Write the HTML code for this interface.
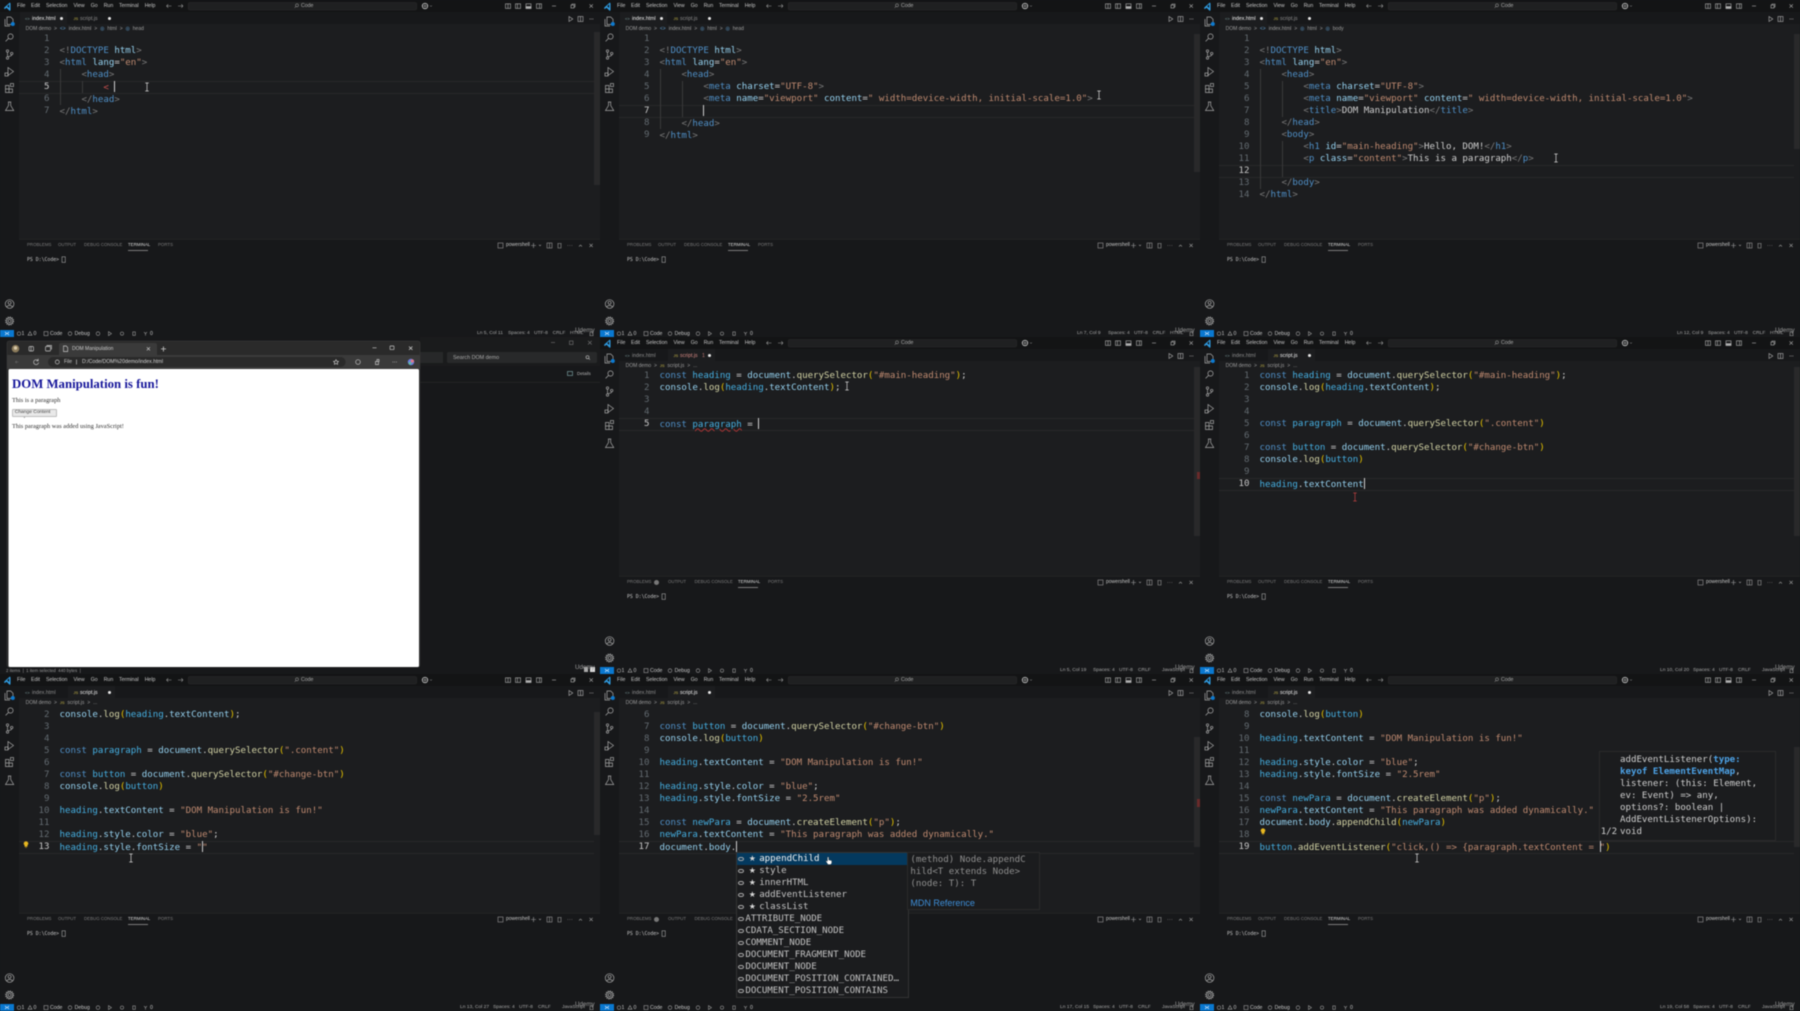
<!DOCTYPE html>
<html lang="en"><head><meta charset="utf-8"><title>VS Code DOM lesson</title>
<style>
html,body{margin:0;padding:0;background:#17181a;width:1800px;height:1011px;overflow:hidden}
#r{position:absolute;left:0;top:0;width:1800px;height:1011px;overflow:hidden;filter:blur(.4px);font-family:"Liberation Sans",sans-serif}
.p{position:absolute;width:600px;height:337px;overflow:hidden;font-size:5.2px;color:#b8b8b8}
.ch{position:absolute;left:0;top:0;width:600px;height:337px}
.tx span,.pt span,.sr span,.tb span,.tb i{position:absolute;line-height:6px;white-space:pre}
.tx span{top:3.300px;color:#c4c4c4}
.tx span:nth-child(1){left:17px}.tx span:nth-child(2){left:31px}.tx span:nth-child(3){left:46px}.tx span:nth-child(4){left:73.5px}.tx span:nth-child(5){left:90.7px}.tx span:nth-child(6){left:103.7px}.tx span:nth-child(7){left:119px}.tx span:nth-child(8){left:144.7px}.tx span:nth-child(9){left:301px;color:#aaa}
.tx span:nth-child(10){left:506px;top:242px;font-size:5px}
.tx span:nth-child(11){left:27px;top:256.500px;font:4.85px/6px "DejaVu Sans Mono",monospace}
.tx span:nth-child(12){left:21.5px;top:330.700px}.tx span:nth-child(13){left:33.5px;top:330.700px}.tx span:nth-child(14){left:50px;top:330.700px}.tx span:nth-child(15){left:74.6px;top:330.700px}.tx span:nth-child(16){left:150px;top:330.700px}
.tx span:nth-child(17){left:575px;top:327.500px;font-size:6.2px;color:#9a9a9a}
.pt span{top:242px;font-size:4.4px;color:#7c7c7c}
.pt span:nth-child(1){left:27px}.pt span:nth-child(2){left:58px}.pt span:nth-child(3){left:84px}.pt span:nth-child(4){left:128px;color:#dedede}.pt span:nth-child(5){left:158px}
.pt.b span:nth-child(2){left:68px}.pt.b span:nth-child(3){left:94.5px}.pt.b span:nth-child(4){left:138px}.pt.b span:nth-child(5){left:168px}
.sr span{top:330.700px;font-size:4.9px;color:#a8a8a8}
.sr span:nth-child(1){left:477px}.sr span:nth-child(2){left:508px}.sr span:nth-child(3){left:534px}.sr span:nth-child(4){left:552.6px}.sr span:nth-child(5){left:570px}
.sr.j span:nth-child(1){left:460px}.sr.j span:nth-child(2){left:493px}.sr.j span:nth-child(3){left:519px}.sr.j span:nth-child(4){left:538px}.sr.j span:nth-child(5){left:562px}
.tb span{top:16px;color:#8c8c8c}
.tb .on{color:#f0f0f0}
.tb .t1{left:32px}.tb .t2{left:80px}
.tb .h1{left:25px;top:16px;font-size:4px;color:#8aa}.tb .j1{left:73.5px;font-size:4px;color:#c9b84a}
.a1,.a2{position:absolute;top:12px;height:12px;background:#1c1d1f}.tb .a1{left:20px;width:47px}.tb .a2{left:67.5px;width:47.5px}
.tb i.dt{width:3px;height:3px;border-radius:50%;background:#e8e8e8;top:17px}
.bc{position:absolute;left:25.6px;top:26px;line-height:6px;display:flex;gap:2.9px;color:#9c9c9c;white-space:pre;font-size:5px}
.bc b{font-weight:400;color:#5f9ccc}.bc u{text-decoration:none;color:#c9b84a;font-size:4px}
.ed{position:absolute;left:19px;top:34px;width:575px;height:205px;overflow:hidden}
pre{position:absolute;margin:0;font:9.12px/12px "DejaVu Sans Mono",monospace;white-space:pre;color:#cfcfcf}
pre i{font-style:normal}
.c{left:40.5px}
.n{left:1px;width:29.5px;text-align:right;color:#626a70}
.n b{font-weight:400;color:#c6c6c6}
.k{color:#4f8fc6}.v{color:#45aee0}.w{color:#94d0ee}.f{color:#d2d2a4}.s{color:#bf8a70}.g{color:#7a7a7a}.y{color:#e8c400}.e{color:#c8504f}
.hl{position:absolute;left:0;width:575px;height:11px;border-top:.5px solid #282829;border-bottom:.5px solid #282829}
.gd{position:absolute;width:.6px;background:#3a3a3a}
.cu{display:inline-block;width:0;height:11px;border-left:.9px solid #cfcfcf;vertical-align:-2px;margin-right:-.9px}
.sq{text-decoration:underline wavy #a33;text-decoration-thickness:.4px;text-underline-offset:1px}
.ib{position:absolute;width:8px;height:10px;overflow:visible;color:#d8d8d8}
.sb{position:absolute;left:594.3px;width:5.7px;background:#29292a}
.sg{position:absolute;left:136.6px;top:178.7px;width:171px;height:144px;background:#1b1c1e;outline:.6px solid #333;font:9.12px/12px "DejaVu Sans Mono",monospace;color:#c4c4c4}
.sg div{height:12px;position:relative;padding-left:8.8px;white-space:pre}
.sg div.st{padding-left:22.6px}
.sg div.se{background:#04395e;color:#f4f4f4}
.sg div::before{content:"";position:absolute;left:1.9px;top:4.4px;width:3.2px;height:2.4px;border:.6px solid #a9a9a9;border-radius:50%}
.sg div.st em{position:absolute;left:12.2px;top:0;font:normal 8px/12px "DejaVu Sans",sans-serif;color:#d8d8d8}
.dc{position:absolute;left:308.4px;top:178.7px;width:130.4px;height:56.6px;background:#1b1c1e;outline:.5px solid #2a2a2a}
.dc pre{left:2px;top:1.6px;color:#8f8f8f}
.dc span{position:absolute;left:2px;top:44px;font-size:9px;line-height:12px;color:#3d8ed8;white-space:pre}
.pw{position:absolute;left:399.5px;top:78px;width:175.5px;height:88px;background:#1b1c1e;outline:.5px solid #2a2a2a}
.pw pre{left:20.5px;top:2px}
.pw .z{left:1.2px;top:74px}
.pw .bl{color:#4da3e8;font-weight:700}
.br span{position:absolute;white-space:pre}
</style></head><body><div id="r">
<svg width="0" height="0" style="position:absolute"><defs>
<symbol id="ib" viewBox="0 0 8 10"><path d="M2.3 1h3.4M4 1v8M2.3 9h3.4" stroke="currentColor" stroke-width=".7" fill="none"/></symbol>
<symbol id="chrome" viewBox="0 0 600 337">
<rect width="600" height="337" fill="#17181a"/>
<rect width="600" height="12" fill="#131415"/>
<rect x="19" y="24" width="581" height="215" fill="#1c1d1f"/>
<path d="M19 239.300h581" stroke="#272829" stroke-width=".6"/>
<path d="M4.3 7.5l5.6-5 .6 1v6.500l-.6 1-3.400-3.300-1.600 1.300-.8-.5zM9.200 4.300l-2 1.900 2 1.800z" fill="#2f9be0"/>
<path d="M166.500 6h5M166.500 6l1.700-1.700M166.500 6l1.700 1.700M178 6h5M183 6l-1.700-1.700M183 6l-1.700 1.700" stroke="#9a9a9a" stroke-width=".6" fill="none"/>
<rect x="188.200" y="2.500" width="228.500" height="7.500" rx="1.500" fill="#1f2021" stroke="#2c2c2c" stroke-width=".5"/>
<circle cx="297" cy="5.300" r="1.500" fill="none" stroke="#aaa" stroke-width=".5"/><path d="M296 6.400l-1.400 1.400" stroke="#aaa" stroke-width=".5"/>
<circle cx="425" cy="6" r="2.700" fill="none" stroke="#bbb" stroke-width=".9"/><path d="M423 6h4M425 4v4" stroke="#bbb" stroke-width=".5"/><path d="M430 5.500l1 1 1-1" stroke="#999" stroke-width=".5" fill="none"/>
<g fill="none" stroke="#b0b0b0" stroke-width=".6"><rect x="505.500" y="3.800" width="5" height="4.600"/><path d="M508 3.800v4.600"/><rect x="515.500" y="3.800" width="5" height="4.600"/><path d="M517.500 3.800v4.600"/><rect x="526" y="3.800" width="5" height="4.600"/><path d="M526 6.500h5v1.900h-5z" fill="#b0b0b0"/><rect x="536.500" y="3.800" width="5" height="4.600"/><path d="M539.500 3.800v4.600"/>
<path d="M552 6h4"/><rect x="571" y="5" width="3" height="3"/><path d="M572 5v-1h3v3h-1"/><path d="M589.500 4.300l3.400 3.400M592.900 4.300l-3.400 3.400"/>
<path d="M569 16.500l3.800 2.500-3.800 2.500z"/><rect x="578" y="16.500" width="5" height="5"/><path d="M580.500 16.500v5"/></g>
<path d="M589.500 19h.8M591 19h.8M592.500 19h.8" stroke="#aaa" stroke-width=".7"/>
<g fill="none" stroke="#a8a8a8" stroke-width=".7">
<path d="M7 17h3.700l2.300 2.300v5.200h-6zM5 19v7h5"/>
<circle cx="10.500" cy="36.500" r="2.600"/><path d="M8.600 38.400l-3 3"/>
<circle cx="7.500" cy="51" r="1.200"/><circle cx="7.500" cy="58" r="1.200"/><circle cx="11.700" cy="53.500" r="1.200"/><path d="M7.500 52.200v4.600M11.700 54.700c0 2-4.200 1.500-4.200 2.300"/>
<path d="M8 67.500l5.500 4-5.500 4z"/><rect x="5" y="73" width="3" height="3"/>
<path d="M5.500 85.500h3.500v3.500h-3.500zM5.500 89h3.500v3.500h-3.500zM9 89h3.500v3.500h-3.500z"/><rect x="10.500" y="83.500" width="3" height="3"/>
<path d="M8 102h3.200M8.500 102v3.500l-3 5h8.200l-3-5V102"/>
<circle cx="9.600" cy="304" r="4.300"/><circle cx="9.600" cy="302.800" r="1.500"/><path d="M6.600 307.200c1-2.300 5-2.300 6 0"/>
<circle cx="9.600" cy="321" r="1.500"/><circle cx="9.600" cy="321" r="3.100"/><circle cx="9.600" cy="321" r="4" stroke-width="1" stroke-dasharray="1.100 1"/>
</g>
<circle cx="12.800" cy="24" r="2" fill="#0d7ad0"/>
<g fill="none" stroke="#a0a0a0" stroke-width=".55">
<rect x="498" y="243" width="5" height="5"/><path d="M533.500 243v5M531 245.500h5M539 244.800l1 1 1-1" stroke-width=".6"/><rect x="547" y="243" width="5" height="5"/><path d="M549.500 243v5"/><path d="M557.500 243.500h4M558 243.500v4.500h3v-4.500" /><path d="M567.500 245.500h.7M569.500 245.500h.7M571.500 245.500h.7"/><path d="M579 246.500l1.500-1.500 1.500 1.500"/><path d="M589.500 243.800l3.200 3.200M592.700 243.800l-3.200 3.200"/>
</g>
<rect x="62" y="256.800" width="3.300" height="5.600" fill="none" stroke="#bbb" stroke-width=".5"/>
<rect y="330" width="14" height="7" fill="#0a78d0"/><path d="M5 332l1.700 1.500-1.700 1.500M9 332l-1.700 1.500 1.700 1.500" stroke="#e8f2ff" stroke-width=".6" fill="none"/>
<g fill="none" stroke="#a4a4a4" stroke-width=".55" transform="translate(0 .6)"><circle cx="19" cy="333" r="1.700"/><path d="M30 331l2 3.600h-4z"/><rect x="44" y="331" width="4" height="4"/><circle cx="70" cy="333" r="1.800"/><circle cx="98" cy="333" r="1.800"/><path d="M108.500 331l3 2-3 2z"/><circle cx="122" cy="333" r="1.600"/><rect x="132.800" y="331.300" width="2.500" height="3.500"/><path d="M144 331.500l1.500 1.500 1.500-1.500M145.500 333v2"/><path d="M589.500 335h4M590 335v-2.200c0-2.100 3-2.100 3 0v2.200"/></g>
</symbol>
</defs></svg>

<!-- row 1 col 1 -->
<div class="p" style="left:0;top:0"><svg class="ch"><use href="#chrome"/></svg>
<div class="tx"><span>File</span><span>Edit</span><span>Selection</span><span>View</span><span>Go</span><span>Run</span><span>Terminal</span><span>Help</span><span>Code</span><span>powershell</span><span>PS D:\Code&gt;</span><span>1</span><span>0</span><span>Code</span><span>Debug</span><span>0</span><span>Udemy</span></div>
<div class="tb"><i class="a1"></i><span class="h1">&lt;&gt;</span><span class="t1 on">index.html</span><i class="dt" style="left:60px"></i><span class="j1">JS</span><span class="t2">script.js</span><i class="dt" style="left:107.500px"></i></div>
<div class="bc"><span>DOM demo</span><span>&gt;</span><b>&lt;&gt;</b><span>index.html</span><span>&gt;</span><b>◎</b><span>html</span><span>&gt;</span><b>◎</b><span>head</span></div>
<div class="sb" style="top:32px;height:153px"></div>
<div class="ed"><i class="hl" style="top:46.700px"></i><i class="gd" style="left:41px;top:34.700px;height:36px"></i><i class="gd" style="left:62.500px;top:46.700px;height:12px"></i>
<pre class="n" style="top:-1.300px">1
2
3
4
<b>5</b>
6
7</pre><pre class="c" style="top:-1.300px">&#8203;
<i class="g">&lt;!</i><i class="k">DOCTYPE</i> <i class="w">html</i><i class="g">&gt;</i>
<i class="g">&lt;</i><i class="k">html</i> <i class="w">lang</i>=<i class="s">"en"</i><i class="g">&gt;</i>
    <i class="g">&lt;</i><i class="k">head</i><i class="g">&gt;</i>
        <i class="e">&lt;</i> <i class="cu"></i>
    <i class="g">&lt;/</i><i class="k">head</i><i class="g">&gt;</i>
<i class="g">&lt;/</i><i class="k">html</i><i class="g">&gt;</i></pre></div>
<svg class="ib" style="left:143px;top:81.700px"><use href="#ib"/></svg>
<div class="pt"><span>PROBLEMS</span><span>OUTPUT</span><span>DEBUG CONSOLE</span><span>TERMINAL</span><span>PORTS</span></div><i style="position:absolute;left:128px;top:250px;width:20px;height:.6px;background:#7a7a7a"></i>
<div class="sr"><span>Ln 5, Col 11</span><span>Spaces: 4</span><span>UTF-8</span><span>CRLF</span><span>HTML</span></div></div>

<!-- row 1 col 2 -->
<div class="p" style="left:600px;top:0"><svg class="ch"><use href="#chrome"/></svg>
<div class="tx"><span>File</span><span>Edit</span><span>Selection</span><span>View</span><span>Go</span><span>Run</span><span>Terminal</span><span>Help</span><span>Code</span><span>powershell</span><span>PS D:\Code&gt;</span><span>1</span><span>0</span><span>Code</span><span>Debug</span><span>0</span><span>Udemy</span></div>
<div class="tb"><i class="a1"></i><span class="h1">&lt;&gt;</span><span class="t1 on">index.html</span><i class="dt" style="left:60px"></i><span class="j1">JS</span><span class="t2">script.js</span><i class="dt" style="left:107.500px"></i></div>
<div class="bc"><span>DOM demo</span><span>&gt;</span><b>&lt;&gt;</b><span>index.html</span><span>&gt;</span><b>◎</b><span>html</span><span>&gt;</span><b>◎</b><span>head</span></div>
<div class="sb" style="top:34px;height:138px"></div>
<div class="ed"><i class="hl" style="top:70.700px"></i><i class="gd" style="left:41px;top:34.700px;height:60px"></i><i class="gd" style="left:62.500px;top:46.700px;height:36px"></i>
<pre class="n" style="top:-1.300px">1
2
3
4
5
6
<b>7</b>
8
9</pre><pre class="c" style="top:-1.300px">&#8203;
<i class="g">&lt;!</i><i class="k">DOCTYPE</i> <i class="w">html</i><i class="g">&gt;</i>
<i class="g">&lt;</i><i class="k">html</i> <i class="w">lang</i>=<i class="s">"en"</i><i class="g">&gt;</i>
    <i class="g">&lt;</i><i class="k">head</i><i class="g">&gt;</i>
        <i class="g">&lt;</i><i class="k">meta</i> <i class="w">charset</i>=<i class="s">"UTF-8"</i><i class="g">&gt;</i>
        <i class="g">&lt;</i><i class="k">meta</i> <i class="w">name</i>=<i class="s">"viewport"</i> <i class="w">content</i>=<i class="s">" width=device-width, initial-scale=1.0"</i><i class="g">&gt;</i>
        <i class="cu"></i>
    <i class="g">&lt;/</i><i class="k">head</i><i class="g">&gt;</i>
<i class="g">&lt;/</i><i class="k">html</i><i class="g">&gt;</i></pre></div>
<svg class="ib" style="left:495px;top:90px"><use href="#ib"/></svg>
<div class="pt"><span>PROBLEMS</span><span>OUTPUT</span><span>DEBUG CONSOLE</span><span>TERMINAL</span><span>PORTS</span></div><i style="position:absolute;left:128px;top:250px;width:20px;height:.6px;background:#7a7a7a"></i>
<div class="sr"><span>Ln 7, Col 9</span><span>Spaces: 4</span><span>UTF-8</span><span>CRLF</span><span>HTML</span></div></div>

<!-- row 1 col 3 -->
<div class="p" style="left:1200px;top:0"><svg class="ch"><use href="#chrome"/></svg>
<div class="tx"><span>File</span><span>Edit</span><span>Selection</span><span>View</span><span>Go</span><span>Run</span><span>Terminal</span><span>Help</span><span>Code</span><span>powershell</span><span>PS D:\Code&gt;</span><span>1</span><span>0</span><span>Code</span><span>Debug</span><span>0</span><span>Udemy</span></div>
<div class="tb"><i class="a1"></i><span class="h1">&lt;&gt;</span><span class="t1 on">index.html</span><i class="dt" style="left:60px"></i><span class="j1">JS</span><span class="t2">script.js</span><i class="dt" style="left:107.500px"></i></div>
<div class="bc"><span>DOM demo</span><span>&gt;</span><b>&lt;&gt;</b><span>index.html</span><span>&gt;</span><b>◎</b><span>html</span><span>&gt;</span><b>◎</b><span>body</span></div>
<div class="sb" style="top:34px;height:115px"></div>
<div class="ed"><i class="hl" style="top:130.700px"></i><i class="gd" style="left:41px;top:34.700px;height:120px"></i><i class="gd" style="left:62.500px;top:46.700px;height:36px"></i><i class="gd" style="left:62.500px;top:106.700px;height:36px"></i>
<pre class="n" style="top:-1.300px">1
2
3
4
5
6
7
8
9
10
11
<b>12</b>
13
14</pre><pre class="c" style="top:-1.300px">&#8203;
<i class="g">&lt;!</i><i class="k">DOCTYPE</i> <i class="w">html</i><i class="g">&gt;</i>
<i class="g">&lt;</i><i class="k">html</i> <i class="w">lang</i>=<i class="s">"en"</i><i class="g">&gt;</i>
    <i class="g">&lt;</i><i class="k">head</i><i class="g">&gt;</i>
        <i class="g">&lt;</i><i class="k">meta</i> <i class="w">charset</i>=<i class="s">"UTF-8"</i><i class="g">&gt;</i>
        <i class="g">&lt;</i><i class="k">meta</i> <i class="w">name</i>=<i class="s">"viewport"</i> <i class="w">content</i>=<i class="s">" width=device-width, initial-scale=1.0"</i><i class="g">&gt;</i>
        <i class="g">&lt;</i><i class="k">title</i><i class="g">&gt;</i>DOM Manipulation<i class="g">&lt;/</i><i class="k">title</i><i class="g">&gt;</i>
    <i class="g">&lt;/</i><i class="k">head</i><i class="g">&gt;</i>
    <i class="g">&lt;</i><i class="k">body</i><i class="g">&gt;</i>
        <i class="g">&lt;</i><i class="k">h1</i> <i class="w">id</i>=<i class="s">"main-heading"</i><i class="g">&gt;</i>Hello, DOM!<i class="g">&lt;/</i><i class="k">h1</i><i class="g">&gt;</i>
        <i class="g">&lt;</i><i class="k">p</i> <i class="w">class</i>=<i class="s">"content"</i><i class="g">&gt;</i>This is a paragraph<i class="g">&lt;/</i><i class="k">p</i><i class="g">&gt;</i>

    <i class="g">&lt;/</i><i class="k">body</i><i class="g">&gt;</i>
<i class="g">&lt;/</i><i class="k">html</i><i class="g">&gt;</i></pre></div>
<svg class="ib" style="left:352px;top:153px"><use href="#ib"/></svg>
<div class="pt"><span>PROBLEMS</span><span>OUTPUT</span><span>DEBUG CONSOLE</span><span>TERMINAL</span><span>PORTS</span></div><i style="position:absolute;left:128px;top:250px;width:20px;height:.6px;background:#7a7a7a"></i>
<div class="sr"><span>Ln 12, Col 9</span><span>Spaces: 4</span><span>UTF-8</span><span>CRLF</span><span>HTML</span></div></div>

<!-- row 2 col 1: browser over explorer -->
<div class="p br" style="left:0;top:337px;background:#17181a">
<svg width="600" height="337" style="position:absolute;left:0;top:0">
<rect x="420" y="0" width="180" height="13" fill="#1a1b1c"/>
<rect x="420" y="13" width="180" height="16" fill="#1a1b1c"/>
<rect x="420" y="15" width="23" height="11" fill="#272829"/>
<rect x="447" y="15" width="150" height="11" rx="1.500" fill="#28292a"/>
<path d="M420 45.300h180" stroke="#2b2b2b" stroke-width=".7"/>
<g fill="none" stroke="#777" stroke-width=".6"><path d="M551 5.500h4"/><rect x="569.500" y="4" width="3.500" height="3.500"/><path d="M588 3.800l3.700 3.700M591.700 3.800L588 7.500"/></g>
<g fill="none" stroke="#bbb" stroke-width=".6"><circle cx="587.500" cy="20.200" r="1.500"/><path d="M588.600 21.300l1.400 1.400"/></g>
<rect x="567.500" y="34.500" width="5" height="4" fill="none" stroke="#9cc" stroke-width=".5"/>
<rect x="7" y="4" width="413" height="326" rx="2" fill="#2a2a2a" stroke="#3a3a3a" stroke-width=".5"/>
<rect x="7" y="18" width="413" height="14" fill="#3a3a3a"/>
<path d="M59 18v-10q0-2 2-2h94q2 0 2 2v10z" fill="#3a3a3a"/>
<rect x="48" y="20" width="297.600" height="10" rx="5" fill="#2a2a2a"/>
<rect x="8.500" y="32" width="410.500" height="298" rx="1.500" fill="#fff"/>
<circle cx="15.500" cy="11.700" r="3.800" fill="#8a7a5a"/><circle cx="15.500" cy="11" r="1.700" fill="#d8c8a8"/>
<g fill="none" stroke="#c8c8c8" stroke-width=".65">
<rect x="29" y="9.500" width="4.500" height="4.500" rx="1"/><path d="M31 9.500v4.500"/><rect x="45.500" y="9.500" width="5" height="4.500" rx=".8"/><path d="M46.500 8.500h5v4"/>
<path d="M63.500 9h2.700l1.500 1.500v4h-4.200z"/><path d="M146.800 10.200l3.200 3.200M150 10.200l-3.200 3.200"/><path d="M163.400 9.500v5M161 11.900h5" stroke-width=".8"/>
<path d="M372.500 10.800h4"/><rect x="390" y="9" width="4" height="3.600" rx=".5"/><path d="M409 9.500l3.400 3.400M412.400 9.500L409 12.900" stroke-width=".8"/>
<path d="M38 23.500a2.500 2.500 0 1 0 .6 2M38.200 21.800v2h-2"/>
<circle cx="57.300" cy="25" r="2"/><path d="M76.500 22.500v5"/>
<path d="M336 22.700l.8 1.500 1.700.2-1.200 1.200.3 1.700-1.600-.8-1.600.8.3-1.700-1.200-1.200 1.700-.2z"/>
<circle cx="358" cy="25" r="2.300"/><path d="M375.500 24.500h3v3h-3zM377 22.500h2v2h-2z"/><path d="M392.500 25h.7M394.300 25h.7M396.100 25h.7"/></g>
<circle cx="411" cy="25" r="3.200" fill="#6a7ee0"/><circle cx="412.300" cy="24" r="1.600" fill="#e07a8a"/><circle cx="410" cy="26.300" r="1.400" fill="#60c0a0"/>
<path d="M18.500 25h-3l1.200-1.200M15.500 25l1.200 1.200" stroke="#666" stroke-width=".6" fill="none"/>
<path d="M22.500 76l3 2.700-1.300.2.700 1.600-.6.300-.8-1.600-1 .8z" fill="#fff" stroke="#333" stroke-width=".3"/>
<rect x="584" y="330" width="4" height="5" fill="#aaa"/><rect x="590" y="330" width="5" height="5" fill="#ddd"/>
</svg>
<span style="left:72px;top:8.700px;font-size:5px;line-height:6px;color:#c8c8c8">DOM Manipulation</span>
<span style="left:64px;top:22px;font-size:5px;line-height:6px;color:#c8c8c8">File</span>
<span style="left:82px;top:22px;font-size:5.200px;line-height:6px;color:#d0d0d0">D:/Code/DOM%20demo/index.html</span>
<span style="left:453px;top:17.500px;font-size:5.400px;line-height:6px;color:#a8a8a8">Search DOM demo</span>
<span style="left:577px;top:34px;font-size:4.500px;line-height:6px;color:#b0b0b0">Details</span>
<span style="left:12px;top:37.500px;font:bold 12.800px/18px 'Liberation Serif',serif;color:#16169a">DOM Manipulation is fun!</span>
<span style="left:12px;top:59.500px;font:6.350px/8px 'Liberation Serif',serif;color:#333">This is a paragraph</span>
<i style="position:absolute;left:11.500px;top:71.500px;width:45.500px;height:8.500px;background:#e9e9e9;border:.5px solid #bdbdbd;border-radius:1px;box-sizing:border-box"></i>
<span style="left:14.800px;top:72.800px;font-size:4.900px;line-height:6px;color:#444">Change Content</span>
<span style="left:12px;top:85.500px;font:6.350px/8px 'Liberation Serif',serif;color:#333">This paragraph was added using JavaScript!</span>
<span style="left:6px;top:331px;font-size:4.400px;line-height:6px;color:#999">2 items  |  1 item selected  440 bytes  |</span>
<span style="left:575px;top:327.500px;font-size:6.200px;line-height:6px;color:#9a9a9a">Udemy</span>
</div>

<!-- row 2 col 2 -->
<div class="p" style="left:600px;top:337px"><svg class="ch"><use href="#chrome"/></svg>
<div class="tx"><span>File</span><span>Edit</span><span>Selection</span><span>View</span><span>Go</span><span>Run</span><span>Terminal</span><span>Help</span><span>Code</span><span>powershell</span><span>PS D:\Code&gt;</span><span>1</span><span>0</span><span>Code</span><span>Debug</span><span>0</span><span>Udemy</span></div>
<div class="tb"><i class="a2"></i><span class="h1">&lt;&gt;</span><span class="t1">index.html</span><span class="j1">JS</span><span class="t2" style="color:#d88a84">script.js</span><span style="left:102px;color:#c07a75">1</span><i class="dt" style="left:107.500px"></i></div>
<div class="bc"><span>DOM demo</span><span>&gt;</span><u>JS</u><span>script.js</span><span>&gt;</span><span>...</span></div>
<div class="sb" style="top:30px;height:169px"></div>
<i style="position:absolute;left:597px;top:135px;width:3px;height:7px;background:#6a2a2a"></i>
<div class="ed"><i class="hl" style="top:46.700px"></i>
<pre class="n" style="top:-1.300px">1
2
3
4
<b>5</b></pre><pre class="c" style="top:-1.300px"><i class="k">const</i> <i class="v">heading</i> = <i class="w">document</i>.<i class="f">querySelector</i><i class="y">(</i><i class="s">"#main-heading"</i><i class="y">)</i>;
<i class="w">console</i>.<i class="f">log</i><i class="y">(</i><i class="v">heading</i>.<i class="w">textContent</i><i class="y">)</i>;


<i class="k">const</i> <i class="v sq">paragraph</i> = <i class="cu"></i></pre></div>
<svg class="ib" style="left:243px;top:44px"><use href="#ib"/></svg>
<div class="pt b"><span>PROBLEMS</span><span>OUTPUT</span><span>DEBUG CONSOLE</span><span>TERMINAL</span><span>PORTS</span></div><i style="position:absolute;left:138px;top:250px;width:20px;height:.6px;background:#7a7a7a"></i><i style="position:absolute;left:53.500px;top:242.500px;width:5px;height:5px;border-radius:50%;background:#777"></i>
<div class="sr j"><span>Ln 5, Col 19</span><span>Spaces: 4</span><span>UTF-8</span><span>CRLF</span><span>JavaScript</span></div></div>

<!-- row 2 col 3 -->
<div class="p" style="left:1200px;top:337px"><svg class="ch"><use href="#chrome"/></svg>
<div class="tx"><span>File</span><span>Edit</span><span>Selection</span><span>View</span><span>Go</span><span>Run</span><span>Terminal</span><span>Help</span><span>Code</span><span>powershell</span><span>PS D:\Code&gt;</span><span>1</span><span>0</span><span>Code</span><span>Debug</span><span>0</span><span>Udemy</span></div>
<div class="tb"><i class="a2"></i><span class="h1">&lt;&gt;</span><span class="t1">index.html</span><span class="j1">JS</span><span class="t2 on">script.js</span><i class="dt" style="left:107.500px"></i></div>
<div class="bc"><span>DOM demo</span><span>&gt;</span><u>JS</u><span>script.js</span><span>&gt;</span><span>...</span></div>
<div class="sb" style="top:30px;height:169px"></div>
<div class="ed"><i class="hl" style="top:106.700px"></i>
<pre class="n" style="top:-1.300px">1
2
3
4
5
6
7
8
9
<b>10</b></pre><pre class="c" style="top:-1.300px"><i class="k">const</i> <i class="v">heading</i> = <i class="w">document</i>.<i class="f">querySelector</i><i class="y">(</i><i class="s">"#main-heading"</i><i class="y">)</i>;
<i class="w">console</i>.<i class="f">log</i><i class="y">(</i><i class="v">heading</i>.<i class="w">textContent</i><i class="y">)</i>;


<i class="k">const</i> <i class="v">paragraph</i> = <i class="w">document</i>.<i class="f">querySelector</i><i class="y">(</i><i class="s">".content"</i><i class="y">)</i>

<i class="k">const</i> <i class="v">button</i> = <i class="w">document</i>.<i class="f">querySelector</i><i class="y">(</i><i class="s">"#change-btn"</i><i class="y">)</i>
<i class="w">console</i>.<i class="f">log</i><i class="y">(</i><i class="v">button</i><i class="y">)</i>

<i class="v">heading</i>.<i class="w">textContent</i><i class="cu"></i></pre></div>
<svg class="ib" style="left:151px;top:155px;color:#c04040"><use href="#ib"/></svg>
<div class="pt"><span>PROBLEMS</span><span>OUTPUT</span><span>DEBUG CONSOLE</span><span>TERMINAL</span><span>PORTS</span></div><i style="position:absolute;left:128px;top:250px;width:20px;height:.6px;background:#7a7a7a"></i>
<div class="sr j"><span>Ln 10, Col 20</span><span>Spaces: 4</span><span>UTF-8</span><span>CRLF</span><span>JavaScript</span></div></div>

<!-- row 3 col 1 -->
<div class="p" style="left:0;top:674px"><svg class="ch"><use href="#chrome"/></svg>
<div class="tx"><span>File</span><span>Edit</span><span>Selection</span><span>View</span><span>Go</span><span>Run</span><span>Terminal</span><span>Help</span><span>Code</span><span>powershell</span><span>PS D:\Code&gt;</span><span>1</span><span>0</span><span>Code</span><span>Debug</span><span>0</span><span>Udemy</span></div>
<div class="tb"><i class="a2"></i><span class="h1">&lt;&gt;</span><span class="t1">index.html</span><span class="j1">JS</span><span class="t2 on">script.js</span><i class="dt" style="left:107.500px"></i></div>
<div class="bc"><span>DOM demo</span><span>&gt;</span><u>JS</u><span>script.js</span><span>&gt;</span><span>...</span></div>
<div class="sb" style="top:38px;height:123px"></div>
<div class="ed"><i class="hl" style="top:132.700px"></i>
<pre class="n" style="top:-11.300px">1
2
3
4
5
6
7
8
9
10
11
12
<b>13</b></pre><pre class="c" style="top:-11.300px"><i class="k">const</i> <i class="v">heading</i> = <i class="w">document</i>.<i class="f">querySelector</i><i class="y">(</i><i class="s">"#main-heading"</i><i class="y">)</i>;
<i class="w">console</i>.<i class="f">log</i><i class="y">(</i><i class="v">heading</i>.<i class="w">textContent</i><i class="y">)</i>;


<i class="k">const</i> <i class="v">paragraph</i> = <i class="w">document</i>.<i class="f">querySelector</i><i class="y">(</i><i class="s">".content"</i><i class="y">)</i>

<i class="k">const</i> <i class="v">button</i> = <i class="w">document</i>.<i class="f">querySelector</i><i class="y">(</i><i class="s">"#change-btn"</i><i class="y">)</i>
<i class="w">console</i>.<i class="f">log</i><i class="y">(</i><i class="v">button</i><i class="y">)</i>

<i class="v">heading</i>.<i class="w">textContent</i> = <i class="s">"DOM Manipulation is fun!"</i>

<i class="v">heading</i>.<i class="w">style</i>.<i class="w">color</i> = <i class="s">"blue"</i>;
<i class="v">heading</i>.<i class="w">style</i>.<i class="w">fontSize</i> = <i class="s">"<i class="cu"></i>"</i></pre></div>
<svg style="position:absolute;left:23px;top:166.500px;width:6px;height:8px"><path d="M3 .5a2 2 0 0 1 1.300 3.600V5.500H1.700V4.100A2 2 0 0 1 3 .5zM2 6.500h2" fill="#e8b820" stroke="#e8b820" stroke-width=".4"/></svg>
<svg class="ib" style="left:127px;top:179px"><use href="#ib"/></svg>
<div class="pt"><span>PROBLEMS</span><span>OUTPUT</span><span>DEBUG CONSOLE</span><span>TERMINAL</span><span>PORTS</span></div><i style="position:absolute;left:128px;top:250px;width:20px;height:.6px;background:#7a7a7a"></i>
<div class="sr j"><span>Ln 13, Col 27</span><span>Spaces: 4</span><span>UTF-8</span><span>CRLF</span><span>JavaScript</span></div></div>

<!-- row 3 col 2 -->
<div class="p" style="left:600px;top:674px"><svg class="ch"><use href="#chrome"/></svg>
<div class="tx"><span>File</span><span>Edit</span><span>Selection</span><span>View</span><span>Go</span><span>Run</span><span>Terminal</span><span>Help</span><span>Code</span><span>powershell</span><span>PS D:\Code&gt;</span><span>1</span><span>0</span><span>Code</span><span>Debug</span><span>0</span><span>Udemy</span></div>
<div class="tb"><i class="a2"></i><span class="h1">&lt;&gt;</span><span class="t1">index.html</span><span class="j1">JS</span><span class="t2 on">script.js</span><i class="dt" style="left:107.500px"></i></div>
<div class="bc"><span>DOM demo</span><span>&gt;</span><u>JS</u><span>script.js</span><span>&gt;</span><span>...</span></div>
<div class="sb" style="top:63px;height:110px"></div>
<i style="position:absolute;left:597px;top:125px;width:3px;height:8px;background:#6a2a2a"></i>
<div class="ed"><i class="hl" style="top:132.700px"></i>
<pre class="n" style="top:-11.300px">5
6
7
8
9
10
11
12
13
14
15
16
<b>17</b></pre><pre class="c" style="top:-11.300px"><i class="k">const</i> <i class="v">paragraph</i> = <i class="w">document</i>.<i class="f">querySelector</i><i class="y">(</i><i class="s">".content"</i><i class="y">)</i>

<i class="k">const</i> <i class="v">button</i> = <i class="w">document</i>.<i class="f">querySelector</i><i class="y">(</i><i class="s">"#change-btn"</i><i class="y">)</i>
<i class="w">console</i>.<i class="f">log</i><i class="y">(</i><i class="v">button</i><i class="y">)</i>

<i class="v">heading</i>.<i class="w">textContent</i> = <i class="s">"DOM Manipulation is fun!"</i>

<i class="v">heading</i>.<i class="w">style</i>.<i class="w">color</i> = <i class="s">"blue"</i>;
<i class="v">heading</i>.<i class="w">style</i>.<i class="w">fontSize</i> = <i class="s">"2.5rem"</i>

<i class="k">const</i> <i class="v">newPara</i> = <i class="w">document</i>.<i class="f">createElement</i><i class="y">(</i><i class="s">"p"</i><i class="y">)</i>;
<i class="v">newPara</i>.<i class="w">textContent</i> = <i class="s">"This paragraph was added dynamically."</i>
<i class="w">document</i>.<i class="w">body</i>.<i class="cu"></i></pre></div>
<div class="pt b"><span>PROBLEMS</span><span>OUTPUT</span><span>DEBUG CONSOLE</span><span>TERMINAL</span><span>PORTS</span></div><i style="position:absolute;left:53.500px;top:242.500px;width:5px;height:5px;border-radius:50%;background:#777"></i>
<div class="sg"><div class="st se"><em>★</em>appendChild</div><div class="st"><em>★</em>style</div><div class="st"><em>★</em>innerHTML</div><div class="st"><em>★</em>addEventListener</div><div class="st"><em>★</em>classList</div><div>ATTRIBUTE_NODE</div><div>CDATA_SECTION_NODE</div><div>COMMENT_NODE</div><div>DOCUMENT_FRAGMENT_NODE</div><div>DOCUMENT_NODE</div><div>DOCUMENT_POSITION_CONTAINED…</div><div>DOCUMENT_POSITION_CONTAINS</div></div>
<div class="dc"><pre>(method) Node.appendC
hild&lt;T extends Node&gt;
(node: T): T</pre><span>MDN Reference</span></div>
<svg style="position:absolute;left:225px;top:182px;width:8px;height:9px"><path d="M2.500 1h1.200v3l3 .6v2.500l-1 1.400H3L.8 5l1 -.3.700.8z" fill="#fff" stroke="#222" stroke-width=".3"/></svg>
<div class="sr j"><span>Ln 17, Col 15</span><span>Spaces: 4</span><span>UTF-8</span><span>CRLF</span><span>JavaScript</span></div></div>

<!-- row 3 col 3 -->
<div class="p" style="left:1200px;top:674px"><svg class="ch"><use href="#chrome"/></svg>
<div class="tx"><span>File</span><span>Edit</span><span>Selection</span><span>View</span><span>Go</span><span>Run</span><span>Terminal</span><span>Help</span><span>Code</span><span>powershell</span><span>PS D:\Code&gt;</span><span>1</span><span>0</span><span>Code</span><span>Debug</span><span>0</span><span>Udemy</span></div>
<div class="tb"><i class="a2"></i><span class="h1">&lt;&gt;</span><span class="t1">index.html</span><span class="j1">JS</span><span class="t2 on">script.js</span><i class="dt" style="left:107.500px"></i></div>
<div class="bc"><span>DOM demo</span><span>&gt;</span><u>JS</u><span>script.js</span><span>&gt;</span><span>...</span></div>
<div class="sb" style="top:73px;height:100px"></div>
<div class="ed"><i class="hl" style="top:132.700px"></i>
<pre class="n" style="top:-11.300px">7
8
9
10
11
12
13
14
15
16
17
18
<b>19</b></pre><pre class="c" style="top:-11.300px"><i class="k">const</i> <i class="v">button</i> = <i class="w">document</i>.<i class="f">querySelector</i><i class="y">(</i><i class="s">"#change-btn"</i><i class="y">)</i>
<i class="w">console</i>.<i class="f">log</i><i class="y">(</i><i class="v">button</i><i class="y">)</i>

<i class="v">heading</i>.<i class="w">textContent</i> = <i class="s">"DOM Manipulation is fun!"</i>

<i class="v">heading</i>.<i class="w">style</i>.<i class="w">color</i> = <i class="s">"blue"</i>;
<i class="v">heading</i>.<i class="w">style</i>.<i class="w">fontSize</i> = <i class="s">"2.5rem"</i>

<i class="k">const</i> <i class="v">newPara</i> = <i class="w">document</i>.<i class="f">createElement</i><i class="y">(</i><i class="s">"p"</i><i class="y">)</i>;
<i class="v">newPara</i>.<i class="w">textContent</i> = <i class="s">"This paragraph was added dynamically."</i>
<i class="w">document</i>.<i class="w">body</i>.<i class="f">appendChild</i><i class="y">(</i><i class="v">newPara</i><i class="y">)</i>

<i class="v">button</i>.<i class="f">addEventListener</i><i class="y">(</i><i class="s">"click,() =&gt; {paragraph.textContent = <i class="cu"></i>"</i><i class="y">)</i></pre></div>
<svg style="position:absolute;left:60px;top:154px;width:6px;height:8px"><path d="M3 .5a2 2 0 0 1 1.300 3.600V5.500H1.700V4.100A2 2 0 0 1 3 .5zM2 6.500h2" fill="#e8b820" stroke="#e8b820" stroke-width=".4"/></svg>
<div class="pw"><pre>addEventListener(<i class="bl">type:</i>
<i class="bl">keyof ElementEventMap</i>,
listener: (this: Element,
ev: Event) =&gt; any,
options?: boolean |
AddEventListenerOptions):
void</pre><pre class="z">1/2</pre></div>
<svg class="ib" style="left:213px;top:179px"><use href="#ib"/></svg>
<div class="pt"><span>PROBLEMS</span><span>OUTPUT</span><span>DEBUG CONSOLE</span><span>TERMINAL</span><span>PORTS</span></div><i style="position:absolute;left:128px;top:250px;width:20px;height:.6px;background:#7a7a7a"></i>
<div class="sr j"><span>Ln 19, Col 58</span><span>Spaces: 4</span><span>UTF-8</span><span>CRLF</span><span>JavaScript</span></div></div>
</div></body></html>
